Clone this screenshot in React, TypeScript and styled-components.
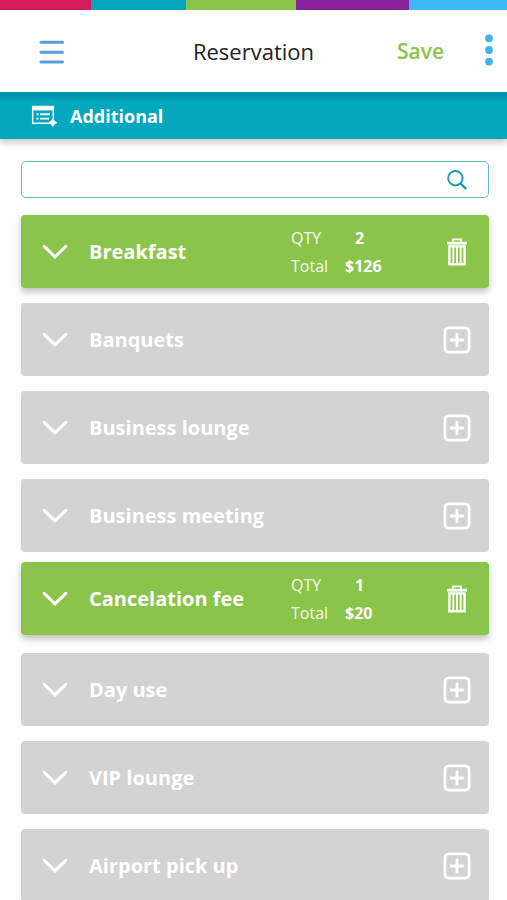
import React, { useState } from "react";
import styled, { createGlobalStyle } from "styled-components";

const colors = {
  teal: "#03a7be",
  green: "#8bc44a",
  grey: "#d3d3d3",
  blue: "#3fb4ee",
};

const GlobalStyle = createGlobalStyle`
  *, *::before, *::after { box-sizing: border-box; }
  html { scrollbar-width: none; }
  body {
    margin: 0;
    background: #fefefe;
    font-family: "Open Sans", "Noto Sans", sans-serif;
  }
  button { font: inherit; color: inherit; background: none; border: 0; padding: 0; cursor: pointer; }
  svg { display: block; }
`;

const Stripes = styled.div`
  display: flex;
  height: 10px;
`;

const Stripe = styled.span<{ $color: string; $share: number }>`
  flex: ${(p) => p.$share} 1 0;
  background: ${(p) => p.$color};
`;

const Header = styled.header`
  display: grid;
  grid-template-columns: 1fr auto 1fr;
  align-items: center;
  height: 82px;
  padding: 0 13px;
`;

const MenuButton = styled.button`
  justify-self: start;
  margin-left: 25px;
  && { color: #559fd8; }
`;

const Title = styled.h1`
  margin: 0;
  font-size: 22px;
  line-height: 30px;
  font-weight: 400;
  color: #222;
`;

const HeaderActions = styled.div`
  display: flex;
  align-items: center;
  justify-content: flex-end;
  gap: 40px;
`;

const SaveButton = styled.button`
  && {
    font-size: 21px;
    line-height: 30px;
    font-weight: 600;
    color: ${colors.green};
  }
`;

const MoreButton = styled.button`
  && { color: ${colors.blue}; }
`;

const SectionBar = styled.div`
  display: flex;
  align-items: center;
  gap: 12px;
  height: 47px;
  padding: 0 31px;
  color: #fff;
  background: linear-gradient(rgba(0, 70, 90, 0.25), rgba(0, 70, 90, 0) 10px) ${colors.teal};
  box-shadow: 0 4px 6px rgba(0, 0, 0, 0.2);
`;

const SectionTitle = styled.h2`
  margin: 0;
  font-size: 18px;
  line-height: 24px;
  font-weight: 700;
`;

const Content = styled.main`
  padding: 22px 18px 14px 21px;
`;

const SearchBox = styled.form`
  display: flex;
  align-items: center;
  height: 37px;
  margin-bottom: 17px;
  padding-right: 20px;
  border: 1px solid #5dbccb;
  border-radius: 5px;
  background: #fff;
`;

const SearchInput = styled.input`
  flex: 1;
  min-width: 0;
  height: 100%;
  padding: 0 16px;
  border: 0;
  outline: 0;
  background: transparent;
  font: 16px "Open Sans", sans-serif;
`;

const SearchButton = styled.button`
  && { color: #1c9db3; }
`;

const ServiceList = styled.ul`
  display: flex;
  flex-direction: column;
  gap: 15px;
  margin: 0;
  padding: 0;
  list-style: none;
`;

const ServiceRow = styled.li<{ $selected: boolean }>`
  display: flex;
  align-items: center;
  height: 73px;
  padding: 0 18px 0 21px;
  border-radius: 4px;
  color: #fff;
  background: ${(p) => (p.$selected ? colors.green : colors.grey)};
  box-shadow: ${(p) => (p.$selected ? "0 4px 6px rgba(0, 0, 0, 0.24)" : "none")};

  li + & {
    margin: ${(p) => (p.$selected ? "-5px 0 3px" : "0")};
  }
`;

const ExpandButton = styled.button`
  display: flex;
  flex: 1;
  align-items: center;
  gap: 21px;
  text-align: left;

  && {
    font-size: 20px;
    line-height: 28px;
    font-weight: 700;
  }
`;

const Summary = styled.dl`
  display: grid;
  grid-template-columns: 54px 98px;
  margin: 0;
  font-size: 16px;
  line-height: 28px;
`;

const SummaryLabel = styled.dt`
  opacity: 0.9;
`;

const SummaryValue = styled.dd<{ $indent?: boolean }>`
  margin: 0;
  padding-left: ${(p) => (p.$indent ? "10px" : "0")};
  font-weight: 700;
`;

const ActionButton = styled.button`
  display: flex;
  justify-content: center;
  width: 28px;
`;

const MenuIcon = () => (
  <svg width="28" height="26" viewBox="0 0 28 26" stroke="currentColor" strokeWidth="3" strokeLinecap="round">
    <path d="M3 4.2h21.5M3 14.2h21.5M3 24h21.5" />
  </svg>
);

const MoreIcon = () => (
  <svg width="10" height="34" viewBox="0 0 10 34" fill="currentColor">
    <circle cx="5" cy="4.3" r="3.9" />
    <circle cx="5" cy="16" r="3.9" />
    <circle cx="5" cy="27.6" r="3.9" />
  </svg>
);

const FormIcon = () => (
  <svg width="27" height="22" viewBox="0 0 27 22" fill="none" stroke="currentColor">
    <path d="M1.7 1.5v16.7h17M22.3 3v11" strokeWidth="1.5" />
    <path d="M1 .8h22v4.6H1z" fill="currentColor" stroke="none" />
    <path d="M5.5 9.2h2M9 9.2h10M5.5 13.6h2M9 13.6h9" strokeWidth="1.9" />
    <path d="M21.8 13.9l1.6 2.2 2.4 1.6-2.4 1.6-1.6 2.2-1.6-2.2-2.4-1.6 2.4-1.6z" fill="currentColor" strokeWidth="0.8" />
  </svg>
);

const SearchIcon = () => (
  <svg width="22" height="22" viewBox="0 0 22 22" fill="none" stroke="currentColor" strokeWidth="2">
    <circle cx="9.4" cy="9.2" r="7.2" />
    <path d="M14.4 14.3l5.7 5.5" strokeWidth="2.5" />
  </svg>
);

const ChevronIcon = () => (
  <svg width="26" height="16" viewBox="0 0 26 16" fill="none" stroke="currentColor" strokeWidth="3">
    <path d="M2.2 2.3L13 12.8 23.8 2.3" strokeLinecap="round" />
  </svg>
);

const TrashIcon = () => (
  <svg width="22" height="28" viewBox="0 0 22 28" fill="none" stroke="currentColor">
    <path d="M1 5.2h20" strokeWidth="2.8" />
    <path d="M7 4V1.4h8V4" strokeWidth="1.8" />
    <path d="M3.4 8.4h15.2v17.8H3.4z" strokeWidth="2.4" />
    <path d="M7.3 8v18M11 8v18M14.7 8v18" strokeWidth="1.9" />
  </svg>
);

const PlusIcon = () => (
  <svg width="28" height="28" viewBox="0 0 28 28" fill="none" stroke="currentColor" strokeWidth="2.8">
    <rect x="1.9" y="1.9" width="24.2" height="24.2" rx="4" />
    <path d="M14 6.8v14.4M6.8 14h14.4" />
  </svg>
);

type Service = { name: string; price: number; quantity: number };

const initialServices: Service[] = [
  { name: "Breakfast", price: 63, quantity: 2 },
  { name: "Banquets", price: 80, quantity: 0 },
  { name: "Business lounge", price: 45, quantity: 0 },
  { name: "Business meeting", price: 90, quantity: 0 },
  { name: "Cancelation fee", price: 20, quantity: 1 },
  { name: "Day use", price: 50, quantity: 0 },
  { name: "VIP lounge", price: 70, quantity: 0 },
  { name: "Airport pick up", price: 35, quantity: 0 },
];

const stripes = [
  { color: "#d31b5c", share: 91 },
  { color: colors.teal, share: 95 },
  { color: colors.green, share: 110 },
  { color: "#8a219c", share: 113 },
  { color: "#3db8f5", share: 98 },
];

export default function App() {
  const [services, setServices] = useState(initialServices);
  const [query, setQuery] = useState("");

  const setQuantity = (name: string, quantity: number) =>
    setServices((list) => list.map((s) => (s.name === name ? { ...s, quantity } : s)));

  const visible = services.filter((s) => s.name.toLowerCase().includes(query.toLowerCase()));

  return (
    <>
      <GlobalStyle />
      <Stripes>
        {stripes.map((s) => (
          <Stripe key={s.color} $color={s.color} $share={s.share} />
        ))}
      </Stripes>
      <Header>
        <MenuButton aria-label="Menu">
          <MenuIcon />
        </MenuButton>
        <Title>Reservation</Title>
        <HeaderActions>
          <SaveButton>Save</SaveButton>
          <MoreButton aria-label="More options">
            <MoreIcon />
          </MoreButton>
        </HeaderActions>
      </Header>
      <SectionBar>
        <FormIcon />
        <SectionTitle>Additional</SectionTitle>
      </SectionBar>
      <Content>
        <SearchBox role="search" onSubmit={(e) => e.preventDefault()}>
          <SearchInput
            type="text"
            aria-label="Search services"
            value={query}
            onChange={(e) => setQuery(e.target.value)}
          />
          <SearchButton type="submit" aria-label="Search">
            <SearchIcon />
          </SearchButton>
        </SearchBox>
        <ServiceList>
          {visible.map(({ name, price, quantity }) => {
            const selected = quantity > 0;
            return (
              <ServiceRow key={name} $selected={selected}>
                <ExpandButton>
                  <ChevronIcon />
                  {name}
                </ExpandButton>
                {selected && (
                  <Summary>
                    <SummaryLabel>QTY</SummaryLabel>
                    <SummaryValue $indent>{quantity}</SummaryValue>
                    <SummaryLabel>Total</SummaryLabel>
                    <SummaryValue>${price * quantity}</SummaryValue>
                  </Summary>
                )}
                <ActionButton
                  aria-label={selected ? `Remove ${name}` : `Add ${name}`}
                  onClick={() => setQuantity(name, selected ? 0 : 1)}
                >
                  {selected ? <TrashIcon /> : <PlusIcon />}
                </ActionButton>
              </ServiceRow>
            );
          })}
        </ServiceList>
      </Content>
    </>
  );
}
